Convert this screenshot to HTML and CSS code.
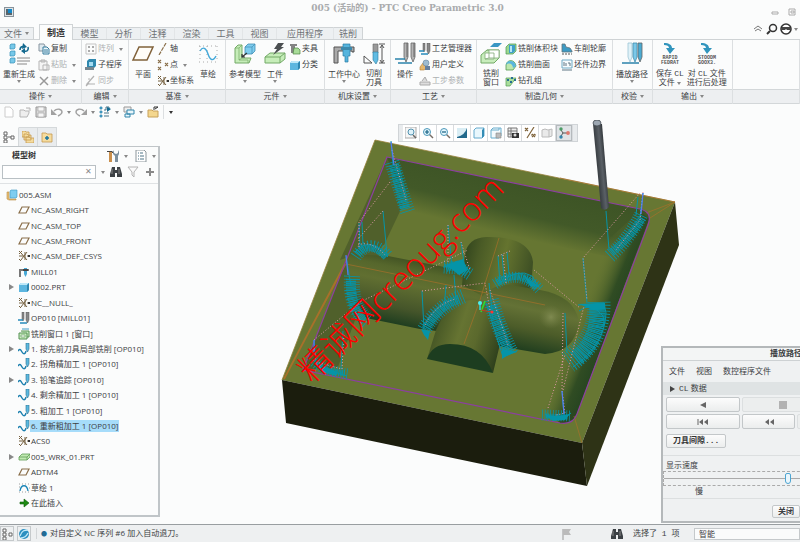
FILE: index.html
```html
<!DOCTYPE html>
<html lang="zh-CN">

<head>
    <meta charset="UTF-8">
    <meta name="viewport" content="width=device-width, initial-scale=1.0">
    <title>005 (活动的) - PTC Creo Parametric 3.0</title>
    <link rel="stylesheet" href="styles.css">
</head>

<body>
    <svg class="defs" width="0" height="0" aria-hidden="true">
        <symbol id="i-plane" viewBox="0 0 12 12"><path d="M4 3h7L8 9H1z" fill="none" stroke="#8a6f4a" stroke-width="1.2" /></symbol>
        <symbol id="i-csys" viewBox="0 0 12 12"><path d="M1 1l3 3M1 4l3-3M3 3l6 7M3 10l6-8M5 6H1M7 2v8M9 6h3M1 9l2 2" fill="none" stroke="#75603f" /><path d="M10 5h2v2h-2z" fill="#333" /></symbol>
        <symbol id="i-cube" viewBox="0 0 12 12"><path d="M1 4l2-2h8v7l-2 2H1z" fill="#5db6df" /><path d="M1 4l2-2h8L9 4z" fill="#bfe8f8" /><path d="M9 4l2-2v7l-2 2z" fill="#2f86b0" /></symbol>
        <symbol id="i-asm" viewBox="0 0 12 12"><path d="M1 3h2v7h7v1H3L1 10z" fill="#eac27a" stroke="#b98c3f" stroke-width=".6" /><path d="M4 2l1-1h6v7l-1 1H4z" fill="#7fcdf0" stroke="#3a94c0" stroke-width=".6" /></symbol>
        <symbol id="i-block" viewBox="0 0 12 12"><path d="M1 6l3-3h8v3L9 9H1z" fill="#bfe8b0" stroke="#5f9d55" stroke-width=".8" /><path d="M1 6h8l3-3M9 6v3" fill="none" stroke="#5f9d55" stroke-width=".8" /></symbol>
        <symbol id="i-mill" viewBox="0 0 12 12"><path d="M1 11V3h10v2H3v6z" fill="#777" /><path d="M6 2h3v6l-1.500 3L6 8z" fill="#47a9d6" /><path d="M5 3h5v2H5z" fill="#444" /></symbol>
        <symbol id="i-op" viewBox="0 0 12 12"><path d="M4 0h2v7L5 9 4 7zM8 0h3v8l-1.500 3L8 8z" fill="#888" stroke="#555" stroke-width=".5" /><path d="M0 8h5M2 11h7" stroke="#298abb" stroke-width="1.300" /></symbol>
        <symbol id="i-win" viewBox="0 0 12 12"><path d="M1 5h8v6H1zM3 3h8v6H9" fill="#c9ecc0" stroke="#559052" /><path d="M3 7h4v2H3z" fill="#fff" stroke="#559052" stroke-width=".6" /><path d="M4 1h7" stroke="#3f9cc8" /></symbol>
        <symbol id="i-nc" viewBox="0 0 12 12"><path d="M0 8c2-3 3-1 4 1s3 3 4-1" fill="none" stroke="#1a7fae" stroke-width="1.400" /><path d="M8 0h3v6L9.500 9 8 6z" fill="#5cb9e0" stroke="#2c6e8d" stroke-width=".6" /></symbol>
        <symbol id="i-sketch" viewBox="0 0 12 12"><path d="M2 9c1-7 7-7 8 0" fill="none" stroke="#1c86b8" stroke-width="1.300" /><path d="M1 2h10M1 10h10M1 5h1M11 6h1" stroke="#777" stroke-width=".7" stroke-dasharray="1 2" /></symbol>
        <symbol id="i-here" viewBox="0 0 12 12"><path d="M2 5h4V2l5 4-5 4V7H2z" fill="#1d8a12" stroke="#0c5c06" stroke-width=".6" /></symbol>
        <symbol id="i-copy" viewBox="0 0 12 12"><path d="M1 1h5l1 2v5H1z" fill="#dfe9ef" stroke="#8795a0" /><path d="M5 4h4l2 2v5H5z" fill="#eaf6fb" stroke="#347a9c" /><path d="M6 7h4M6 9h4" stroke="#347a9c" /></symbol>
        <symbol id="i-paste" viewBox="0 0 12 12"><path d="M1 2h8v9H1zM3 1h4v2H3zM5 6h6v5H5z" fill="#f4f4f4" stroke="#b5b5b5" /></symbol>
        <symbol id="i-del" viewBox="0 0 12 12"><path d="M2 2l8 8M10 2l-8 8" stroke="#999" stroke-width="1.500" /></symbol>
        <symbol id="i-array" viewBox="0 0 12 12"><path d="M1 1h10v10H1z" fill="none" stroke="#c5c5c5" /><path d="M3 3h2v2H3zM7 3h2v2H7zM3 7h2v2H3zM7 7h2v2H7z" fill="#aaa" /></symbol>
        <symbol id="i-sub" viewBox="0 0 12 12"><path d="M2 2l2-2h7v7L9 9H2z" fill="#2f88ae" /><path d="M4 3h4v4H4z" fill="#a5dcf1" /><path d="M0 8h9v3H0z" fill="#76868e" /></symbol>
        <symbol id="i-sync" viewBox="0 0 12 12"><path d="M9 1L2 9h8M1 11l3-3M3 4h2" fill="none" stroke="#b2b2b2" stroke-width="1.200" /></symbol>
        <symbol id="i-axis" viewBox="0 0 12 12"><path d="M9 0L2 12" stroke="#8a6f4a" stroke-width="1.200" stroke-dasharray="4 1" /></symbol>
        <symbol id="i-point" viewBox="0 0 12 12"><path d="M1 1l3 3M4 1L1 4M8 4l3 3M11 4L8 7M1 8l3 3M4 8l-3 3" stroke="#8a6f4a" stroke-width="1.100" /></symbol>
        <symbol id="i-fix" viewBox="0 0 12 12"><path d="M1 1h7v2H6v7H2V3H1z" fill="#848484" /><path d="M5 5h4l2 2v4H4z" fill="#a8dc98" stroke="#4d8444" stroke-width=".7" /></symbol>
        <symbol id="i-hammer" viewBox="0 0 12 12"><path d="M0 1h5l2 2H5L4 2H0z" fill="#444" /><path d="M2 2h3v10H2z" fill="#c98f4c" /><path d="M7 0v3l2 1 2-1V0l1 2v2l-1 2v6H8V6L6 4V2z" fill="#7c8f9d" /></symbol>
        <symbol id="i-list" viewBox="0 0 12 12"><path d="M1 0h8l2 2v10H1z" fill="#fff" stroke="#8d979c" /><path d="M3 3h1M5 3h3M3 6h1M5 6h4M3 9h1M5 9h4" stroke="#4f7587" /></symbol>
        <symbol id="i-bino" viewBox="0 0 12 12"><path d="M2 1h3v3h2V1h3l2 7v3H7V7H5v4H0V8z" fill="#3c4145" /><path d="M2 3v5M9 3v5" stroke="#888" /></symbol>
        <symbol id="i-filter" viewBox="0 0 12 12"><path d="M1 1h10L7 6v5L5 9V6z" fill="#fafafa" stroke="#b4b4b4" /></symbol>
        <symbol id="i-save" viewBox="0 0 12 12"><path d="M1 1h10v10H1z" fill="#d8d8d8" stroke="#989898" /><path d="M3 1h6v4H3zM3 7h6v4H3z" fill="#f7f7f7" stroke="#a6a6a6" stroke-width=".7" /></symbol>
        <symbol id="i-undo" viewBox="0 0 12 12"><path d="M3 5c3-3 8-2 8 1 0 2-2 3-4 4" fill="none" stroke="#a1a1a1" stroke-width="1.400" /><path d="M0 3v6h6z" fill="#a1a1a1" /></symbol>
        <symbol id="i-regen" viewBox="0 0 12 12"><path d="M1 1h2v2H1zM1 5h2v2H1zM1 9h2v2H1z" fill="#58b7df" stroke="#2d7fa6" stroke-width=".7" /><path d="M5 10h5M5 7h5M5 4h2V1M7 1h3v3" fill="none" stroke="#467287" /><path d="M8 1l4 2-4 3z" fill="#126a91" /></symbol>
        <symbol id="i-zoom" viewBox="0 0 12 12"><path d="M7 7l4 4" stroke="#776d66" stroke-width="1.500" /><circle cx="5" cy="5" r="3.500" fill="#e4f6fc" stroke="#4d98b9" /></symbol>
    </svg>

    <header class="titlebar">
        <svg class="app-icon" viewBox="0 0 10 10"><path d="M0 0h10v10H0z" fill="#87929a" /><path d="M1 1h8v8H1z" fill="#dde3e6" /><path d="M2 2v6h6V6H4V2z" fill="#59656c" /><path d="M4 2h4v4H4z" fill="#1487c7" /></svg>
        <h1>005 (活动的) - PTC Creo Parametric 3.0</h1>
        <div class="window-buttons">
            <button aria-label="最小化"><svg viewBox="0 0 8 8"><path d="M1 4h6v2H1z" fill="#fff" stroke="#aaa" /></svg></button>
            <button aria-label="还原"><svg viewBox="0 0 8 8"><path d="M1 1h6v6H1zM3 3h3v2H3z" fill="#fff" stroke="#aaa" /></svg></button>
        </div>
    </header>

    <nav class="tabs">
        <button class="tab file">文件<i class="caret"></i></button>
        <button class="tab active">制造</button>
        <button class="tab">模型</button>
        <button class="tab">分析</button>
        <button class="tab">注释</button>
        <button class="tab">渲染</button>
        <button class="tab">工具</button>
        <button class="tab">视图</button>
        <button class="tab wide">应用程序</button>
        <button class="tab last">铣削</button>
        <div class="tab-tools">
            <button aria-label="折叠"><svg class="ic" viewBox="0 0 12 12"><path d="M2 6l4-3 4 3M3 8l3-2 3 2" fill="none" stroke="#777" /></svg></button>
            <button aria-label="搜索"><svg class="ic" viewBox="0 0 12 12"><circle cx="7" cy="5" r="3.500" fill="none" stroke="#333" stroke-width="1.500" /><path d="M4 8l-3 3" stroke="#333" stroke-width="2" /></svg></button>
            <button aria-label="帮助"><svg class="ic" viewBox="0 0 12 12"><circle cx="6" cy="6" r="5" fill="#fff" stroke="#333" stroke-width="1.600" /><path d="M2 4h8v3H7L6 6 5 7H2z" fill="#444" /></svg></button>
            <i class="caret"></i>
        </div>
    </nav>

    <section class="ribbon">
        <div class="group">
            <div class="tools">
                <button class="big">
                    <svg viewBox="0 0 22 22"><path d="M2 2l1-1h4v4L6 6H2zM2 9l1-1h4v4l-1 1H2zM2 16l1-1h4v4l-1 1H2z" fill="#77c8e9" stroke="#3790b7" stroke-width=".7" /><path d="M9 15h13M9 18h13M9 21h10" stroke="#888" /><path d="M12 7c0-3 2-4 4-3M20 4c1 3-1 5-4 4" fill="none" stroke="#146a90" stroke-width="1.600" /><path d="M15 0l4 4-5 2zM17 5l-4 3 4 3z" fill="#146a90" /></svg>
                    <span>重新生成</span><i class="caret"></i>
                </button>
                <div class="stack">
                    <button><svg class="ic"><use href="#i-copy" /></svg>复制</button>
                    <button disabled><svg class="ic"><use href="#i-paste" /></svg>粘贴<i class="caret"></i></button>
                    <button disabled><svg class="ic"><use href="#i-del" /></svg>删除<i class="caret"></i></button>
                </div>
            </div>
            <h2>操作<i class="caret"></i></h2>
        </div>
        <div class="group">
            <div class="tools">
                <div class="stack">
                    <button disabled><svg class="ic"><use href="#i-array" /></svg>阵列<i class="caret"></i></button>
                    <button><svg class="ic"><use href="#i-sub" /></svg>子程序</button>
                    <button disabled><svg class="ic"><use href="#i-sync" /></svg>同步</button>
                </div>
            </div>
            <h2>编辑<i class="caret"></i></h2>
        </div>
        <div class="group">
            <div class="tools">
                <button class="big">
                    <svg viewBox="0 0 22 22"><path d="M7 4h14l-6 13H1z" fill="#fffdf8" stroke="#80613a" stroke-width="1.500" /></svg>
                    <span>平面</span>
                </button>
                <div class="stack">
                    <button><svg class="ic"><use href="#i-axis" /></svg>轴</button>
                    <button><svg class="ic"><use href="#i-point" /></svg>点<i class="caret"></i></button>
                    <button><svg class="ic"><use href="#i-csys" /></svg>坐标系</button>
                </div>
                <button class="big">
                    <svg viewBox="0 0 22 22"><path d="M2 3h18M2 19h18M3 3v16M20 3v16M10 3v16" stroke="#aaa" stroke-dasharray="1 3" /><path d="M3 8c3-5 6-3 8 3s5 8 8 2" fill="none" stroke="#42a8d9" stroke-width="1.400" /></svg>
                    <span>草绘</span>
                </button>
            </div>
            <h2>基准<i class="caret"></i></h2>
        </div>
        <div class="group">
            <div class="tools">
                <button class="big">
                    <svg viewBox="0 0 22 22"><path d="M1 5l3-3h4v13h9l-2 5H1z" fill="#c6edb9" stroke="#72a966" /><path d="M1 5h4v12h9v3M5 5l3-3M5 17l3-2" fill="none" stroke="#72a966" stroke-width=".7" /><path d="M11 4l3-3h7v7l-3 3h-7z" fill="#7fcdef" stroke="#408eb4" stroke-width=".8" /><path d="M11 4h7v7M18 4l3-3" fill="none" stroke="#408eb4" stroke-width=".7" /><path d="M13 10l-5 4M8 11v3h3" fill="none" stroke="#333" stroke-width="1.200" /></svg>
                    <span>参考模型</span><i class="caret"></i>
                </button>
                <button class="big">
                    <svg viewBox="0 0 22 22"><path d="M1 14l5-4h15v6l-5 4H1z" fill="#c6edb9" stroke="#72a966" /><path d="M1 14h15v6M16 14l5-4" fill="none" stroke="#72a966" /><path d="M14 0h6l-3 4h3L9 12l4-6h-3z" fill="#4b4f51" /></svg>
                    <span>工件</span><i class="caret"></i>
                </button>
                <div class="stack">
                    <button><svg class="ic"><use href="#i-fix" /></svg>夹具</button>
                    <button><svg class="ic"><use href="#i-cube" /></svg>分类</button>
                </div>
            </div>
            <h2>元件<i class="caret"></i></h2>
        </div>
        <div class="group">
            <div class="tools">
                <button class="big">
                    <svg viewBox="0 0 22 22"><path d="M1 20V4h20v5h-2V8H5v12z" fill="#aaa" stroke="#555" /><path d="M10 1h7v12h-2v6h-3v-6h-2z" fill="#55b4dd" stroke="#2b7da4" stroke-width=".7" /><path d="M8 4h11v3H8z" fill="#3d8aad" /></svg>
                    <span>工作中心</span><i class="caret"></i>
                </button>
                <button class="big two">
                    <svg viewBox="0 0 22 22"><path d="M10 1h5v9h-5z" fill="#999" stroke="#666" stroke-width=".6" /><path d="M10 9h5v8l-2 4-3-4z" fill="#61bce3" stroke="#28789d" stroke-width=".6" /><path d="M16 1h6M16 20h6M19 2v17M17 5l2-3 2 3M17 17l2 3 2-3M1 13v7h8z" fill="none" stroke="#555" /></svg>
                    <span>切削<br>刀具</span>
                </button>
            </div>
            <h2>机床设置<i class="caret"></i></h2>
        </div>
        <div class="group">
            <div class="tools">
                <button class="big">
                    <svg viewBox="0 0 22 22"><path d="M10 0h4v14l-2 5-2-5zM17 0h4v14l-2 5-2-5z" fill="#b5b5b5" stroke="#666" stroke-width=".8" /><path d="M13 0v14M20 0v14" stroke="#666" /><path d="M1 16h10M4 20h14" stroke="#2b83ab" stroke-width="1.500" /></svg>
                    <span>操作</span>
                </button>
                <div class="stack">
                    <button><svg class="ic"><use href="#i-op" /></svg>工艺管理器</button>
                    <button><svg class="ic" viewBox="0 0 12 12"><path d="M1 8l3-4 4 5-3 2H1z" fill="#e5b76d" stroke="#b17e34" stroke-width=".6" /><circle cx="7" cy="4" r="3" fill="#9dbbd0" stroke="#6785a0" stroke-width=".6" /><path d="M6 7h5v4H6z" fill="#667f9c" /></svg>用户定义</button>
                    <button disabled><svg class="ic" viewBox="0 0 12 12"><path d="M1 7h10v3H1zM3 6l3-4 2 4" fill="#ddd" stroke="#aaa" /></svg>工步参数</button>
                </div>
            </div>
            <h2>工艺<i class="caret"></i></h2>
        </div>
        <div class="group">
            <div class="tools">
                <button class="big two">
                    <svg viewBox="0 0 22 22"><path d="M10 4l4-4h8l-4 4z" fill="#3a97c4" /><path d="M1 12l6-5h12v8l-5 5H1z" fill="#c8edbc" stroke="#72a966" /><path d="M5 10h9v6H5zM7 7h12v8H9V7M5 16l4-1" fill="#fff" stroke="#82a976" stroke-width=".8" /></svg>
                    <span>铣削<br>窗口</span>
                </button>
                <div class="stack">
                    <button><svg class="ic" viewBox="0 0 12 12"><path d="M1 4l3-3h7v7l-3 3H1z" fill="#9cd890" stroke="#4c9550" stroke-width=".7" /><path d="M4 2h6v6l-2 2H4z" fill="#3f9fc9" /><path d="M5 3h2v6H5z" fill="#b7e6f6" /></svg>铣削体积块</button>
                    <button><svg class="ic" viewBox="0 0 12 12"><path d="M1 11V6c1-6 9-6 10 1l-3 4z" fill="#bde7af" stroke="#559b50" stroke-width=".8" /><path d="M1 6c1-6 9-5 10 1L8 9C8 5 4 3 1 6z" fill="#59b6dd" /></svg>铣削曲面</button>
                    <button><svg class="ic" viewBox="0 0 12 12"><path d="M1 3h10L5 11H1z" fill="#a9dd9c" stroke="#559b50" stroke-width=".7" /><path d="M2 4h2v2H2zM6 2h2v2H6zM9 4h2v2H9zM5 6h2v2H5z" fill="#276e94" /></svg>钻孔组</button>
                </div>
                <div class="stack">
                    <button><svg class="ic" viewBox="0 0 12 12"><path d="M1 1h3l1 3 4 1 2 3v1H1z" fill="#3c9ac4" stroke="#61737b" stroke-width=".8" /><path d="M1 11h10" stroke="#555" stroke-dasharray="2 1" /></svg>车削轮廓</button>
                    <button><svg class="ic" viewBox="0 0 12 12"><path d="M1 1h10v8H1z" fill="#f6fbfd" stroke="#6faac5" /><path d="M3 3v4M5 4v3M7 4h2v3M1 11h10" fill="none" stroke="#607783" /></svg>坯件边界</button>
                </div>
            </div>
            <h2>制造几何<i class="caret"></i></h2>
        </div>
        <div class="group">
            <div class="tools">
                <button class="big">
                    <svg viewBox="0 0 22 22"><path d="M7 0h4v14l-2 5-2-5z" fill="#e1f2f8" stroke="#9dc5d6" stroke-width=".8" /><path d="M12 0h4v14l-2 5-2-5z" fill="#7bc8e8" stroke="#438eae" stroke-width=".8" /><path d="M17 0h4v14l-2 5-2-5z" fill="#4babd2" stroke="#666" stroke-width=".8" /><path d="M1 20h17" stroke="#2b83ab" stroke-width="1.500" /></svg>
                    <span>播放路径</span><i class="caret"></i>
                </button>
            </div>
            <h2>校验<i class="caret"></i></h2>
        </div>
        <div class="group">
            <div class="tools">
                <button class="big two">
                    <svg viewBox="0 0 22 22"><path d="M5 0c5 0 8 2 8 5h3l-5 6-4-6h3C10 3 8 2 5 2z" fill="#3295bd" /><text class="mini" x="11" y="16">RAPID</text><text class="mini" x="11" y="21">FEDRAT</text></svg>
                    <span>保存 <em>CL</em><br>文件 <i class="caret"></i></span>
                </button>
                <button class="big two">
                    <svg viewBox="0 0 22 22"><path d="M5 0c5 0 8 2 8 5h3l-5 6-4-6h3C10 3 8 2 5 2z" fill="#3295bd" /><text class="mini" x="11" y="16">STOODM</text><text class="mini" x="11" y="21">GOOX3.</text></svg>
                    <span>对 <em>CL</em> 文件<br>进行后处理</span>
                </button>
            </div>
            <h2>输出<i class="caret"></i></h2>
        </div>
        <div class="group"><div class="tools"></div><h2></h2></div>
    </section>

    <div class="quickbar">
        <button aria-label="新建"><svg class="ic" viewBox="0 0 12 12"><path d="M2 1h5l3 3v7H2z" fill="#fff" stroke="#ccc" /></svg></button>
        <button aria-label="打开"><svg class="ic" viewBox="0 0 12 12"><path d="M1 4h4l1 1h4v2l-2 4H1zM7 2h4v3" fill="#eee" stroke="#b5b5b5" /></svg></button>
        <button aria-label="保存"><svg class="ic"><use href="#i-save" /></svg></button>
        <button aria-label="撤消"><svg class="ic"><use href="#i-undo" /></svg><i class="caret"></i></button>
        <button aria-label="重做"><svg class="ic flip"><use href="#i-undo" /></svg><i class="caret"></i></button>
        <button aria-label="重新生成"><svg class="ic"><use href="#i-regen" /></svg><i class="caret"></i></button>
        <button aria-label="窗口"><svg class="ic" viewBox="0 0 12 12"><path d="M1 1h7v5H1z" fill="#eee" stroke="#999" /><path d="M4 4h7v4H4zM2 8h5v3H2z" fill="#e8f6fb" stroke="#3185ab" /></svg><i class="caret"></i></button>
        <button aria-label="关闭窗口"><svg class="ic" viewBox="0 0 12 12"><path d="M1 4h4l1 1h5v6H1z" fill="#f4d78e" stroke="#c7a058" /><path d="M7 1h4M7 1v3M8 3l3-2" stroke="#333" /></svg></button>
        <button class="more" aria-label="自定义"><i class="caret dark"></i></button>
    </div>

    <main class="workspace">
        <aside class="side">
            <div class="side-tabs">
                <button class="on" aria-label="模型树"><svg class="ic" viewBox="0 0 12 12"><path d="M1 1h3v3H1zM1 5h3v3H1zM1 9h3v3H1zM8 5h3v3H8zM5 6h3" fill="#fff" stroke="#666" /></svg></button>
                <button aria-label="文件夹浏览器"><svg class="ic" viewBox="0 0 12 12"><path d="M0 0h3l1 1h3v5H0zM2 3h3l1 1h3v5H2zM4 6h3l1 1h4v5H4z" fill="#f5dc9f" stroke="#c59b4e" stroke-width=".8" /></svg></button>
                <button aria-label="收藏夹"><svg class="ic" viewBox="0 0 12 12"><path d="M1 2h4l1 1h5v8H1z" fill="#f5dc9f" stroke="#c59b4e" stroke-width=".8" /><path d="M6 5v4M4 7h4" stroke="#19749f" stroke-width="1.500" /></svg></button>
            </div>
            <div class="panel">
                <div class="panel-head">
                    <h3>模型树</h3>
                    <button aria-label="设置"><svg class="ic"><use href="#i-hammer" /></svg><i class="caret"></i></button>
                    <button aria-label="显示"><svg class="ic"><use href="#i-list" /></svg><i class="caret"></i></button>
                </div>
                <div class="search">
                    <div class="search-box"><input type="text" aria-label="搜索模型树"><button aria-label="清除">✕</button></div>
                    <i class="caret"></i>
                    <button aria-label="查找"><svg class="ic"><use href="#i-bino" /></svg></button>
                    <button aria-label="过滤"><svg class="ic"><use href="#i-filter" /></svg></button>
                    <button aria-label="添加"><svg class="ic" viewBox="0 0 12 12"><path d="M6 2v8M2 6h8" stroke="#888" stroke-width="2" /></svg></button>
                </div>
                <ul class="tree">
                    <li class="root"><svg class="ic"><use href="#i-asm" /></svg><span>005.ASM</span></li>
                    <li><svg class="ic"><use href="#i-plane" /></svg><span>NC_ASM_RIGHT</span></li>
                    <li><svg class="ic"><use href="#i-plane" /></svg><span>NC_ASM_TOP</span></li>
                    <li><svg class="ic"><use href="#i-plane" /></svg><span>NC_ASM_FRONT</span></li>
                    <li><svg class="ic"><use href="#i-csys" /></svg><span>NC_ASM_DEF_CSYS</span></li>
                    <li><svg class="ic"><use href="#i-mill" /></svg><span>MILL01</span></li>
                    <li class="more"><svg class="ic"><use href="#i-cube" /></svg><span>0002.PRT</span></li>
                    <li><svg class="ic"><use href="#i-csys" /></svg><span>NC__NULL_</span></li>
                    <li><svg class="ic"><use href="#i-op" /></svg><span>OP010 [MILL01]</span></li>
                    <li><svg class="ic"><use href="#i-win" /></svg><span>铣削窗口 1 [窗口]</span></li>
                    <li class="more"><svg class="ic"><use href="#i-nc" /></svg><span>1. 按先前刀具局部铣削 [OP010]</span></li>
                    <li><svg class="ic"><use href="#i-nc" /></svg><span>2. 拐角精加工 1 [OP010]</span></li>
                    <li class="more"><svg class="ic"><use href="#i-nc" /></svg><span>3. 铅笔追踪 [OP010]</span></li>
                    <li><svg class="ic"><use href="#i-nc" /></svg><span>4. 剩余精加工 1 [OP010]</span></li>
                    <li><svg class="ic"><use href="#i-nc" /></svg><span>5. 粗加工 1 [OP010]</span></li>
                    <li class="selected"><svg class="ic"><use href="#i-nc" /></svg><span>6. 重新粗加工 1 [OP010]</span></li>
                    <li><svg class="ic"><use href="#i-csys" /></svg><span>ACS0</span></li>
                    <li class="more"><svg class="ic"><use href="#i-block" /></svg><span>005_WRK_01.PRT</span></li>
                    <li><svg class="ic"><use href="#i-plane" /></svg><span>ADTM4</span></li>
                    <li><svg class="ic"><use href="#i-sketch" /></svg><span>草绘 1</span></li>
                    <li><svg class="ic"><use href="#i-here" /></svg><span>在此插入</span></li>
                </ul>
            </div>
        </aside>

        <section class="viewport">
            <svg class="scene" viewBox="160 120 640 404" preserveAspectRatio="xMinYMin meet">
                <defs>
                    <linearGradient id="g-back" gradientUnits="userSpaceOnUse" x1="500" y1="180" x2="488" y2="230"><stop offset="0" stop-color="#3e5526" /><stop offset=".55" stop-color="#425928" /><stop offset="1" stop-color="#667632" /></linearGradient>
                    <linearGradient id="g-right" gradientUnits="userSpaceOnUse" x1="615" y1="315" x2="583" y2="302"><stop offset="0" stop-color="#284621" /><stop offset=".3" stop-color="#304c23" /><stop offset="1" stop-color="#667632" stop-opacity="0" /></linearGradient>
                    <linearGradient id="g-left" gradientUnits="userSpaceOnUse" x1="412" y1="256" x2="398" y2="326"><stop offset="0" stop-color="#3a4b20" /><stop offset=".2" stop-color="#56672c" /><stop offset=".4" stop-color="#616f31" /><stop offset=".75" stop-color="#45552a" /><stop offset="1" stop-color="#1c3c1f" /></linearGradient>
                    <linearGradient id="g-top" gradientUnits="userSpaceOnUse" x1="464" y1="255" x2="534" y2="272"><stop offset="0" stop-color="#34471e" /><stop offset=".2" stop-color="#4a5b26" /><stop offset=".55" stop-color="#65742f" /><stop offset="1" stop-color="#3a4c23" /></linearGradient>
                    <linearGradient id="g-cyl" gradientUnits="userSpaceOnUse" x1="546" y1="289" x2="532" y2="354"><stop offset="0" stop-color="#4c5e28" /><stop offset=".35" stop-color="#647236" /><stop offset=".65" stop-color="#4c5c29" /><stop offset="1" stop-color="#1d3c1e" /></linearGradient>
                    <linearGradient id="g-bot" gradientUnits="userSpaceOnUse" x1="434" y1="330" x2="502" y2="352"><stop offset="0" stop-color="#455625" /><stop offset=".35" stop-color="#667432" /><stop offset=".6" stop-color="#5b692d" /><stop offset="1" stop-color="#2a3c1b" /></linearGradient>
                    <linearGradient id="g-tool" gradientUnits="userSpaceOnUse" x1="596" y1="165" x2="606" y2="164"><stop offset="0" stop-color="#32373b" /><stop offset=".6" stop-color="#5a6066" /><stop offset="1" stop-color="#33383c" /></linearGradient>
                    <radialGradient id="g-shine"><stop offset="0" stop-color="#7f8a50" /><stop offset="1" stop-color="#6d7940" stop-opacity="0" /></radialGradient>
                </defs>

                <!-- block -->
                <path d="M375 140L675 202L582 443L282 380z" fill="#677733" />
                <path d="M282 380L582 443L587 486L286 423z" fill="#1b1d0d" />
                <path d="M582 443L675 202L679 245L587 486z" fill="#2e3316" />
                <path d="M282 380L375 140L675 202" fill="none" stroke="#96803a" stroke-width=".8" />

                <!-- pocket -->
                <path d="M387 157L640 209Q653 212 648 225L577 414Q573 425 560 423L303 370z" fill="#667632" />
                <path d="M387 157L401 196L384 240L338 367L303 370z" fill="#50602b" />
                <path d="M387 157L640 209Q650 212 649 220L634 262L402 214z" fill="url(#g-back)" />
                <path d="M387 157L403 205L384 245L340 260z" fill="#50602b" />
                <path d="M649 219L577 414Q573 425 560 423L545 410L610 238L640 211z" fill="url(#g-right)" />

                <!-- cross shaped core -->
                <path d="M347 254L388 256L470 272L492 290L470 335L420 329L366 318Q345 290 347 254z" fill="url(#g-left)" />
                <path d="M462 285L465 254Q468 238 486 237Q530 236 533 262L531 292L490 300z" fill="url(#g-top)" />
                <path d="M480 300Q490 284 510 285L540 290Q575 296 579 322Q575 352 545 354L498 346z" fill="url(#g-cyl)" />
                <circle cx="551" cy="317" r="12" fill="url(#g-shine)" />
                <path d="M427 359L436 330Q450 298 475 300Q494 302 501 340L493 373Q470 335 427 359z" fill="url(#g-bot)" />
                <path d="M427 359Q432 344 450 344Q482 344 493 373z" fill="#1d3d20" />

                <!-- construction lines -->
                <path d="M346 264L545 305M499 238L480 300L464 344M675 202L646 213M675 202L650 218M582 443L574 416M346 264L317 317M675 202L560 178" fill="none" stroke="#a8702a" stroke-width=".7" />
                <path d="M345 264L313 324L284 379" fill="none" stroke="#a8702a" stroke-width="1.800" />
                <path d="M387 157L640 209Q653 212 648 225L577 414Q573 425 560 423L303 370z" fill="none" stroke="#8c3fa0" stroke-width="1.200" />

                <!-- tool path, hatched bands -->
                <g fill="none" stroke="#0594a8" stroke-dasharray="1.100 .7">
                    <path d="M394 165Q399 185 405 208" stroke-width="10" />
                    <path d="M358 254Q370 240 386 257" stroke-width="7" />
                    <path d="M351 279Q350 308 364 321" stroke-width="10" />
                    <path d="M446 268L457 265L467 273" stroke-width="8" />
                    <path d="M497 283Q520 268 537 288" stroke-width="7" />
                    <path d="M642 218Q630 238 611 253" stroke-width="8" />
                    <path d="M597 305Q600 340 575 359" stroke-width="16" />
                    <path d="M546 416L568 417" stroke-width="5" />
                    <path d="M459 299Q438 306 426 329" stroke-width="9" />
                    <path d="M492 305Q499 330 510 354" stroke-width="10" />
                    <path d="M317 364Q325 372 345 373" stroke-width="6" />
                </g>
                <g fill="none" stroke="#0594a8" stroke-dasharray=".8 1.900">
                    <path d="M392 162Q399 185 408 213" stroke-width="15" />
                    <path d="M356 257Q370 236 388 256" stroke-width="12" />
                    <path d="M352 276Q350 308 368 321" stroke-width="16" />
                    <path d="M444 267L460 268L471 275" stroke-width="13" />
                    <path d="M495 284Q520 268 540 290" stroke-width="11" />
                    <path d="M641 215Q630 238 609 257" stroke-width="14" />
                    <path d="M599 302Q600 340 568 362" stroke-width="23" />
                    <path d="M542 415L571 416" stroke-width="11" />
                    <path d="M463 296Q438 306 424 330" stroke-width="15" />
                    <path d="M491 300Q499 330 512 355" stroke-width="16" />
                    <path d="M314 362Q325 371 349 374" stroke-width="11" />
                </g>
                <g fill="none" stroke="#0594a8" stroke-width="1">
                    <path d="M391 141l2 24M383 211l4 44M359 223l1 26M362 222l1 24M346 256l5 30M448 225l4 42M461 242l4 28M498 256l2 28M502 254l2 24M507 252l2 22M422 291l2 38M446 285l-2 25M454 275l2 24M489 283l4 36M606 211l3 39M583 258l4 45M643 193l-3 24M638 197l-2 18M562 391l2 24M314 340l2 25M343 331l-2 38M565 313l2 40" />
                    <path d="M355 252Q370 235 388 257M443 267l22-2 5 8M498 284Q518 267 532 276L540 289M578 305L604 303L606 313Q605 345 573 367M545 414Q558 425 571 413M486 303L503 357L517 351M313 360Q327 371 347 376" />
                    <path d="M579 311q12-10 24 5q4 15-7 10" />
                </g>
                <path d="M446 265l17-6 4 11-8 5zM545 415l13 1 12-2-5 6-12 1zM421 329l9 2-2 9-4-5zM502 349l15 3-9 3-6 4zM316 364l22 8-2 4-16-5zM523 275l17 12-10-1zM579 304l26-1v6l-12 1z" fill="#0594a8" />

                <!-- rapid moves -->
                <path d="M390 182L359 222M383 211L357 240M314 340L360 302L468 250M422 291L485 283L490 310M640 193L583 258L587 300M563 390L584 306M548 408L565 355M503 255L506 283M534 270L580 308M392 150L406 200M359 222V247M358 245Q371 240 385 255M448 225V262M461 242L470 270M498 256L510 251M425 325Q435 305 455 299M490 290L508 345M316 362L342 369L344 333M643 192L640 220L616 250M563 313L562 390L565 413L556 415" fill="none" stroke="#e29aa8" stroke-width="1" stroke-dasharray="1 2" />
                <path d="M391 142L394 165M346 255L348 275M314 340V352M643 193L641 214M562 391L564 414" stroke="#567cf0" stroke-width="1.200" />

                <!-- cutter -->
                <path d="M593 124L602 124L609 207Q605 212 601 208z" fill="url(#g-tool)" />
                <ellipse cx="597" cy="123" rx="4" ry="3" fill="#9da7b2" stroke="#444b52" stroke-width=".8" />

                <path d="M481 312L485 301" stroke="#2be22b" stroke-width="1.500" /><path d="M481 310L491 312" stroke="#c23c22" /><path d="M480 303V310" stroke="#29d9e0" stroke-width="1.500" />
                <circle cx="480" cy="303" r="2" fill="#48f0f0" /><circle cx="492" cy="312" r="1.500" fill="#f33" />
                <text class="watermark" transform="translate(312 384) rotate(-45)">精诚网creoug.com</text>
            </svg>

            <div class="view-tools">
                <button aria-label="重新调整"><svg class="ic" viewBox="0 0 12 12"><path d="M0 0h11v11H0z" fill="#f6f6f6" stroke="#aaa" /><circle cx="6" cy="5" r="3" fill="#def2fa" stroke="#5493b0" /><path d="M8 8l3 3" stroke="#6c6865" stroke-width="1.500" /></svg></button>
                <button aria-label="放大"><svg class="ic"><use href="#i-zoom" /><path d="M3 5h4M5 3v4" stroke="#135f82" stroke-width="1.200" /></svg></button>
                <button aria-label="缩小"><svg class="ic"><use href="#i-zoom" /><path d="M3 5h4" stroke="#135f82" stroke-width="1.200" /></svg></button>
                <button aria-label="重画"><svg class="ic" viewBox="0 0 12 12"><path d="M1 1h10v10H1z" fill="#23698c" /><path d="M1 1h10Q9 8 1 10z" fill="#d9edf4" /></svg></button>
                <button aria-label="显示样式"><svg class="ic" viewBox="0 0 12 12"><path d="M1 3l2-2h8v8l-2 2H1z" fill="#e8f7fd" stroke="#65aacd" /><path d="M9 3l2-2v8l-2 2z" fill="#328cb5" /></svg></button>
                <button aria-label="已保存方向"><svg class="ic" viewBox="0 0 12 12"><path d="M1 3l2-2h8v8l-2 2H1zM1 3h8V1" fill="#f4fafd" stroke="#68adcd" /><path d="M6 6h5v5H6z" fill="#bbb" stroke="#888" stroke-width=".6" /></svg></button>
                <button aria-label="视图管理器"><svg class="ic" viewBox="0 0 12 12"><path d="M1 1h9v9H1zM1 4h9M4 1v9M1 7h9" fill="#eee" stroke="#777" /><path d="M5 6h7v5H5z" fill="#333" /><circle cx="8" cy="8" r="1.500" fill="#ddd" /></svg></button>
                <button aria-label="基准显示"><svg class="ic" viewBox="0 0 12 12"><path d="M1 1l3 3M4 1L1 4M10 0L3 11M8 7l3 3M11 7l-3 3M7 8h5" stroke="#80653d" stroke-width="1.200" /></svg></button>
                <button aria-label="注释显示"><svg class="ic" viewBox="0 0 12 12"><path d="M1 3l3-1 3 1 4-1v7l-3 1H1z" fill="#eaeaea" stroke="#bbb" /><path d="M8 3v7" stroke="#bbb" /></svg></button>
                <button class="pressed" aria-label="旋转中心"><svg class="ic" viewBox="0 0 12 12"><path d="M3 3l2 3-2 3M5 6h4" fill="none" stroke="#555" /><circle cx="3" cy="2" r="1.700" fill="#4b9c65" /><circle cx="3" cy="10" r="1.700" fill="#3383aa" /><circle cx="10" cy="6" r="1.900" fill="#dd786d" /></svg></button>
            </div>

            <form class="dialog">
                <h2>播放路径</h2>
                <div class="menu"><button type="button">文件</button><button type="button">视图</button><button type="button">数控程序文件</button></div>
                <button type="button" class="section"><i class="right"></i><em>CL</em> 数据</button>
                <div class="player">
                    <button type="button" class="key w3" aria-label="反向播放"><svg viewBox="0 0 12 8"><path d="M9 1v6L3 4z" fill="#666" /></svg></button>
                    <button type="button" class="key w3" disabled aria-label="停止"><svg viewBox="0 0 12 8"><path d="M2 0h8v8H2z" fill="#b2b2b2" /></svg></button>
                    <button type="button" class="key w3" aria-label="播放"><svg viewBox="0 0 12 8"><path d="M3 1v6l6-3z" fill="#666" /></svg></button>
                </div>
                <div class="player">
                    <button type="button" class="key w3" aria-label="开始"><svg viewBox="0 0 12 8"><path d="M1 1v6" stroke="#666" /><path d="M6 1v6L2 4zM11 1v6L7 4z" fill="#666" /></svg></button>
                    <button type="button" class="key w2" aria-label="快退"><svg viewBox="0 0 12 8"><path d="M6 1v6L2 4zM11 1v6L7 4z" fill="#666" /></svg></button>
                    <button type="button" class="key w2" disabled aria-label="快进"></button>
                    <button type="button" class="key w2" disabled aria-label="结束"></button>
                </div>
                <button type="button" class="key clearance">刀具间隙...</button>
                <div class="speed">
                    <label for="speed">显示速度</label>
                    <input type="range" id="speed" min="0" max="100" value="51">
                    <span>慢</span>
                </div>
                <div class="foot"><button type="button" class="key">关闭</button></div>
            </form>
        </section>
    </main>

    <footer class="status">
        <button class="boxed" aria-label="导航器"><svg class="ic" viewBox="0 0 12 12"><path d="M2 1h3v3H2zM2 5h3v3H2zM2 9h3v3H2zM8 5h3v3H8z" fill="#fff" stroke="#666" /></svg></button>
        <button class="boxed" aria-label="浏览器"><svg class="ic" viewBox="0 0 12 12"><circle cx="6" cy="6" r="5" fill="#2c8fc0" /><path d="M2 8c2-6 5-6 8-6M3 10c4 0 6-3 7-5" fill="none" stroke="#c2e8f7" stroke-width="1.300" /></svg></button>
        <p><b>●</b>对自定义 NC 序列 #6 加入自动退刀。</p>
        <svg class="ic flag" viewBox="0 0 12 12"><path d="M2 1v11" stroke="#999" /><path d="M2 1h8L8 4l2 3H2z" fill="#bbb" /></svg>
        <button class="find" aria-label="查找"><svg class="ic"><use href="#i-bino" /></svg></button>
        <span class="count">选择了 1 项</span>
        <select aria-label="选择过滤器"><option>智能</option></select>
    </footer>
</body>

</html>
```

FILE: styles.css
```css
*,
*::before {
    box-sizing: border-box;
    margin: 0;
    padding: 0;
}

body {
    display: flex;
    flex-direction: column;
    height: 100vh;
    overflow: hidden;
    background: #fbfcfc;
    color: #3c4043;
    font: 8px/10px "Liberation Sans", "Noto Sans CJK SC", sans-serif;
}

button {
    display: flex;
    align-items: center;
    border: 0;
    background: none;
    color: inherit;
    font: inherit;
    white-space: nowrap;
}

button:disabled {
    color: #adb0b2;
}

h1,
h2,
h3 {
    font: inherit;
}

em {
    font-family: "Liberation Mono", monospace;
    font-style: normal;
}

.defs {
    position: absolute;
}

.ic {
    flex: none;
    width: 12px;
    height: 12px;
}

.flip {
    transform: scaleX(-1);
}

.caret {
    display: inline-block;
    flex: none;
    border: 2px solid transparent;
    border-top: 3px solid #888;
    border-bottom: 0;
}

.caret.dark {
    border-top-color: #333;
}

/* title */
.titlebar {
    display: flex;
    flex: none;
    align-items: center;
    height: 24px;
    padding: 0 4px;
}

.app-icon {
    width: 10px;
    height: 10px;
}

.titlebar h1 {
    flex: 1;
    padding: 0 0 8px 30px;
    color: #a9abad;
    font: bold 9px/10px "DejaVu Serif", "Noto Sans CJK SC", serif;
    text-align: center;
}

.window-buttons {
    display: flex;
    gap: 9px;
}

.window-buttons svg {
    width: 8px;
    height: 8px;
}

/* ribbon tabs */
.tabs {
    display: flex;
    flex: none;
    align-items: flex-end;
    height: 16px;
    border-bottom: 1px solid #cfd3d5;
}

.tab {
    justify-content: center;
    width: 34px;
    height: 12px;
    border-top: 1px solid #cfd3d5;
    border-right: 1px solid #e2e5e7;
    background: #edf0f2;
    color: #6d7174;
    font-size: 9px;
}

.tab.file {
    gap: 3px;
    margin-right: 5px;
    border-right-color: #cfd3d5;
}

.tab.active {
    height: 16px;
    margin-bottom: -1px;
    border: 1px solid #cfd3d5;
    border-bottom: 0;
    background: #fbfcfc;
    color: #333;
    font-weight: bold;
}

.tab.wide {
    width: 57px;
}

.tab.last {
    width: 29px;
    border-right-color: #cfd3d5;
}

.tab-tools {
    display: flex;
    align-items: center;
    gap: 2px;
    margin-left: auto;
    padding: 0 2px 4px 0;
}

/* ribbon */
.ribbon {
    display: grid;
    flex: none;
    grid-template-columns: 82px 47px 97px 99px 66px 86px 136px 40px 80px 1fr;
}

.group {
    display: flex;
    flex-direction: column;
    border-right: 1px solid #dcdfe1;
}

.tools {
    display: flex;
    flex: 1;
    height: 49px;
    padding: 1px 0 0 3px;
    gap: 3px;
}

.group h2 {
    display: flex;
    align-items: center;
    justify-content: center;
    gap: 3px;
    height: 15px;
    border: solid #d3d7d9;
    border-width: 1px 0;
    background: #edeff1;
}

.big {
    flex-direction: column;
    flex: none;
    min-width: 22px;
    padding-top: 2px;
}

.big > svg {
    width: 22px;
    height: 22px;
    margin-bottom: 5px;
    overflow: visible;
}

.big.two > svg {
    margin-bottom: 4px;
}

.big > span {
    line-height: 10px;
}

.big.two > span {
    line-height: 9px;
}

.mini {
    fill: #555;
    font: bold 5px "Liberation Mono", monospace;
    text-anchor: middle;
}

.stack {
    display: flex;
    flex-direction: column;
}

.stack button {
    gap: 1px;
    height: 16px;
}

.stack .caret {
    margin-left: 4px;
}

/* quick access */
.quickbar {
    display: flex;
    flex: none;
    align-items: center;
    gap: 4px;
    height: 16px;
    padding-left: 3px;
}

.quickbar button {
    gap: 4px;
}

.quickbar .more {
    height: 14px;
    padding-left: 5px;
    border-left: 1px solid #dcdfe1;
}

/* navigator */
.workspace {
    display: flex;
    flex: 1;
    min-height: 0;
}

.side {
    display: flex;
    flex: none;
    flex-direction: column;
    width: 160px;
    padding: 7px 0;
}

.side-tabs {
    display: flex;
    flex: none;
    height: 19px;
}

.side-tabs button {
    justify-content: center;
    width: 19px;
    border: 1px solid #d5d9db;
    border-width: 1px 1px 0 0;
    background: #e9ecee;
}

.side-tabs .on {
    border-top-color: transparent;
    background: none;
}

.panel {
    display: flex;
    flex: 1;
    flex-direction: column;
    border: solid #c0c5c8;
    border-width: 1px 2px 2px 0;
}

.panel-head {
    display: flex;
    align-items: center;
    gap: 7px;
    height: 18px;
    padding: 0 2px 0 12px;
}

.panel-head h3 {
    flex: 1;
    color: #333;
    font-weight: bold;
}

.panel-head button {
    gap: 5px;
}

.search {
    display: flex;
    align-items: center;
    gap: 5px;
    height: 19px;
    padding: 0 2px 4px;
    border-bottom: 1px solid #dfe2e4;
}

.search-box {
    display: flex;
    flex: 1;
    min-width: 0;
    height: 14px;
    border: 1px solid #b9c0c4;
    background: #fff;
}

.search-box input {
    flex: 1;
    min-width: 0;
    border: 0;
    background: none;
    font: inherit;
}

.search-box button {
    padding: 0 3px;
    color: #888;
}

.tree {
    display: flex;
    flex: 1;
    flex-direction: column;
    padding: 3px 0 4px;
    list-style: none;
    font-family: "Open Sans", "Noto Sans CJK SC", sans-serif;
}

.tree li {
    display: flex;
    flex: 1;
    align-items: center;
    padding-left: 18px;
    white-space: nowrap;
}

.tree .root {
    padding-left: 6px;
}

.tree .more {
    padding-left: 9px;
}

.tree .more::before,
.right {
    width: 5px;
    margin-right: 4px;
    border: 3px solid transparent;
    border-right: 0;
    border-left: 5px solid #888;
    content: "";
}

.tree span {
    padding: 0 1px;
    line-height: 12px;
}

.tree .selected span {
    background: #a6dcfa;
}

/* graphics area */
.viewport {
    position: relative;
    flex: 1;
    min-width: 0;
    overflow: hidden;
}

.scene {
    display: block;
    width: 100%;
    height: 100%;
}

.watermark {
    fill: #f00;
    font: 300 33px "Open Sans", "Noto Sans CJK SC", sans-serif;
}

.view-tools {
    position: absolute;
    top: 4px;
    left: 238px;
    display: flex;
    padding: 0 4px;
    border: 1px solid #d0d4d7;
    background: #e8ebed;
}

.view-tools button {
    justify-content: center;
    width: 17px;
    height: 16px;
    border-right: 1px solid #d8dbde;
    background: #fff;
}

.view-tools .pressed {
    background: #dfe3e6;
    box-shadow: inset 0 0 0 1px #b5babd;
}

/* play path window */
.dialog {
    position: absolute;
    top: 226px;
    left: 501px;
    width: 250px;
    border: 2px solid #b4b8ba;
    background: #eff1f2;
}

.dialog h2 {
    height: 13px;
    border-bottom: 1px solid #cdd1d3;
    background: #f3f5f5;
    font-weight: bold;
    line-height: 12px;
    text-align: center;
}

.menu {
    display: flex;
    gap: 11px;
    height: 21px;
    padding-left: 6px;
}

.section {
    width: 100%;
    height: 13px;
    padding-left: 7px;
    background: #dfe3e4;
    white-space: pre;
}

.section .right {
    border-left-color: #444;
}

.player {
    display: flex;
    gap: 2px;
    padding: 2px 3px 0;
}

.key {
    justify-content: center;
    height: 15px;
    border: 1px solid #c3c7c9;
    border-radius: 2px;
    background: linear-gradient(#fcfcfc, #ebeded);
}

.key:disabled {
    border-color: #dcdfe0;
    background: #eceeee;
}

.key svg {
    width: 12px;
    height: 8px;
}

.w3 {
    flex: 3;
}

.w2 {
    flex: 2;
}

.player .w3:first-child {
    flex: none;
    width: 74px;
}

.clearance {
    height: 14px;
    margin: 5px 3px 7px;
    padding: 0 6px;
    color: #333;
    font-family: "Liberation Mono", "Noto Sans CJK SC", monospace;
    font-weight: bold;
}

.speed {
    padding-top: 5px;
    border: solid #dcdfe0;
    border-width: 1px 0;
}

.speed label {
    display: block;
    padding-left: 3px;
}

.speed input {
    display: block;
    width: 100%;
    height: 15px;
    border: 1px dashed #aaa;
    background: none;
    appearance: none;
}

.speed input::-webkit-slider-runnable-track {
    height: 1px;
    background: #aaa;
}

.speed input::-webkit-slider-thumb {
    width: 6px;
    height: 11px;
    margin-top: -5px;
    border: 1px solid #4da5d2;
    border-radius: 2px 2px 3px 3px;
    background: #eaf6fc;
    appearance: none;
}

.speed span {
    display: block;
    padding: 1px 0 1px 32px;
}

.foot {
    display: flex;
    justify-content: center;
    padding: 6px 0 3px;
}

.foot .key {
    height: 13px;
    padding: 0 5px;
    font-weight: bold;
}

/* status bar */
.status {
    display: flex;
    flex: none;
    align-items: center;
    height: 18px;
    border-top: 1px solid #999ea1;
    background: #eef0f1;
    font-family: "Open Sans", "Noto Sans CJK SC", sans-serif;
}

.boxed {
    justify-content: center;
    width: 14px;
    height: 15px;
    margin-right: 3px;
    border: 1px solid #c5c9cb;
}

.status p {
    flex: 1;
    margin-left: 2px;
    padding-left: 4px;
    border-left: 1px solid #d3d6d8;
}

.status b {
    margin-right: 3px;
    color: #226b96;
    font-size: 6px;
}

.find {
    margin: 0 10px 0 38px;
}

.count {
    width: 61px;
    font-family: "Liberation Mono", "Noto Sans CJK SC", monospace;
}

.status select {
    width: 106px;
    height: 12px;
    padding-left: 4px;
    border: 1px solid #c5c9cb;
    background: #fafbfb;
    color: inherit;
    font: inherit;
    appearance: none;
}
```
